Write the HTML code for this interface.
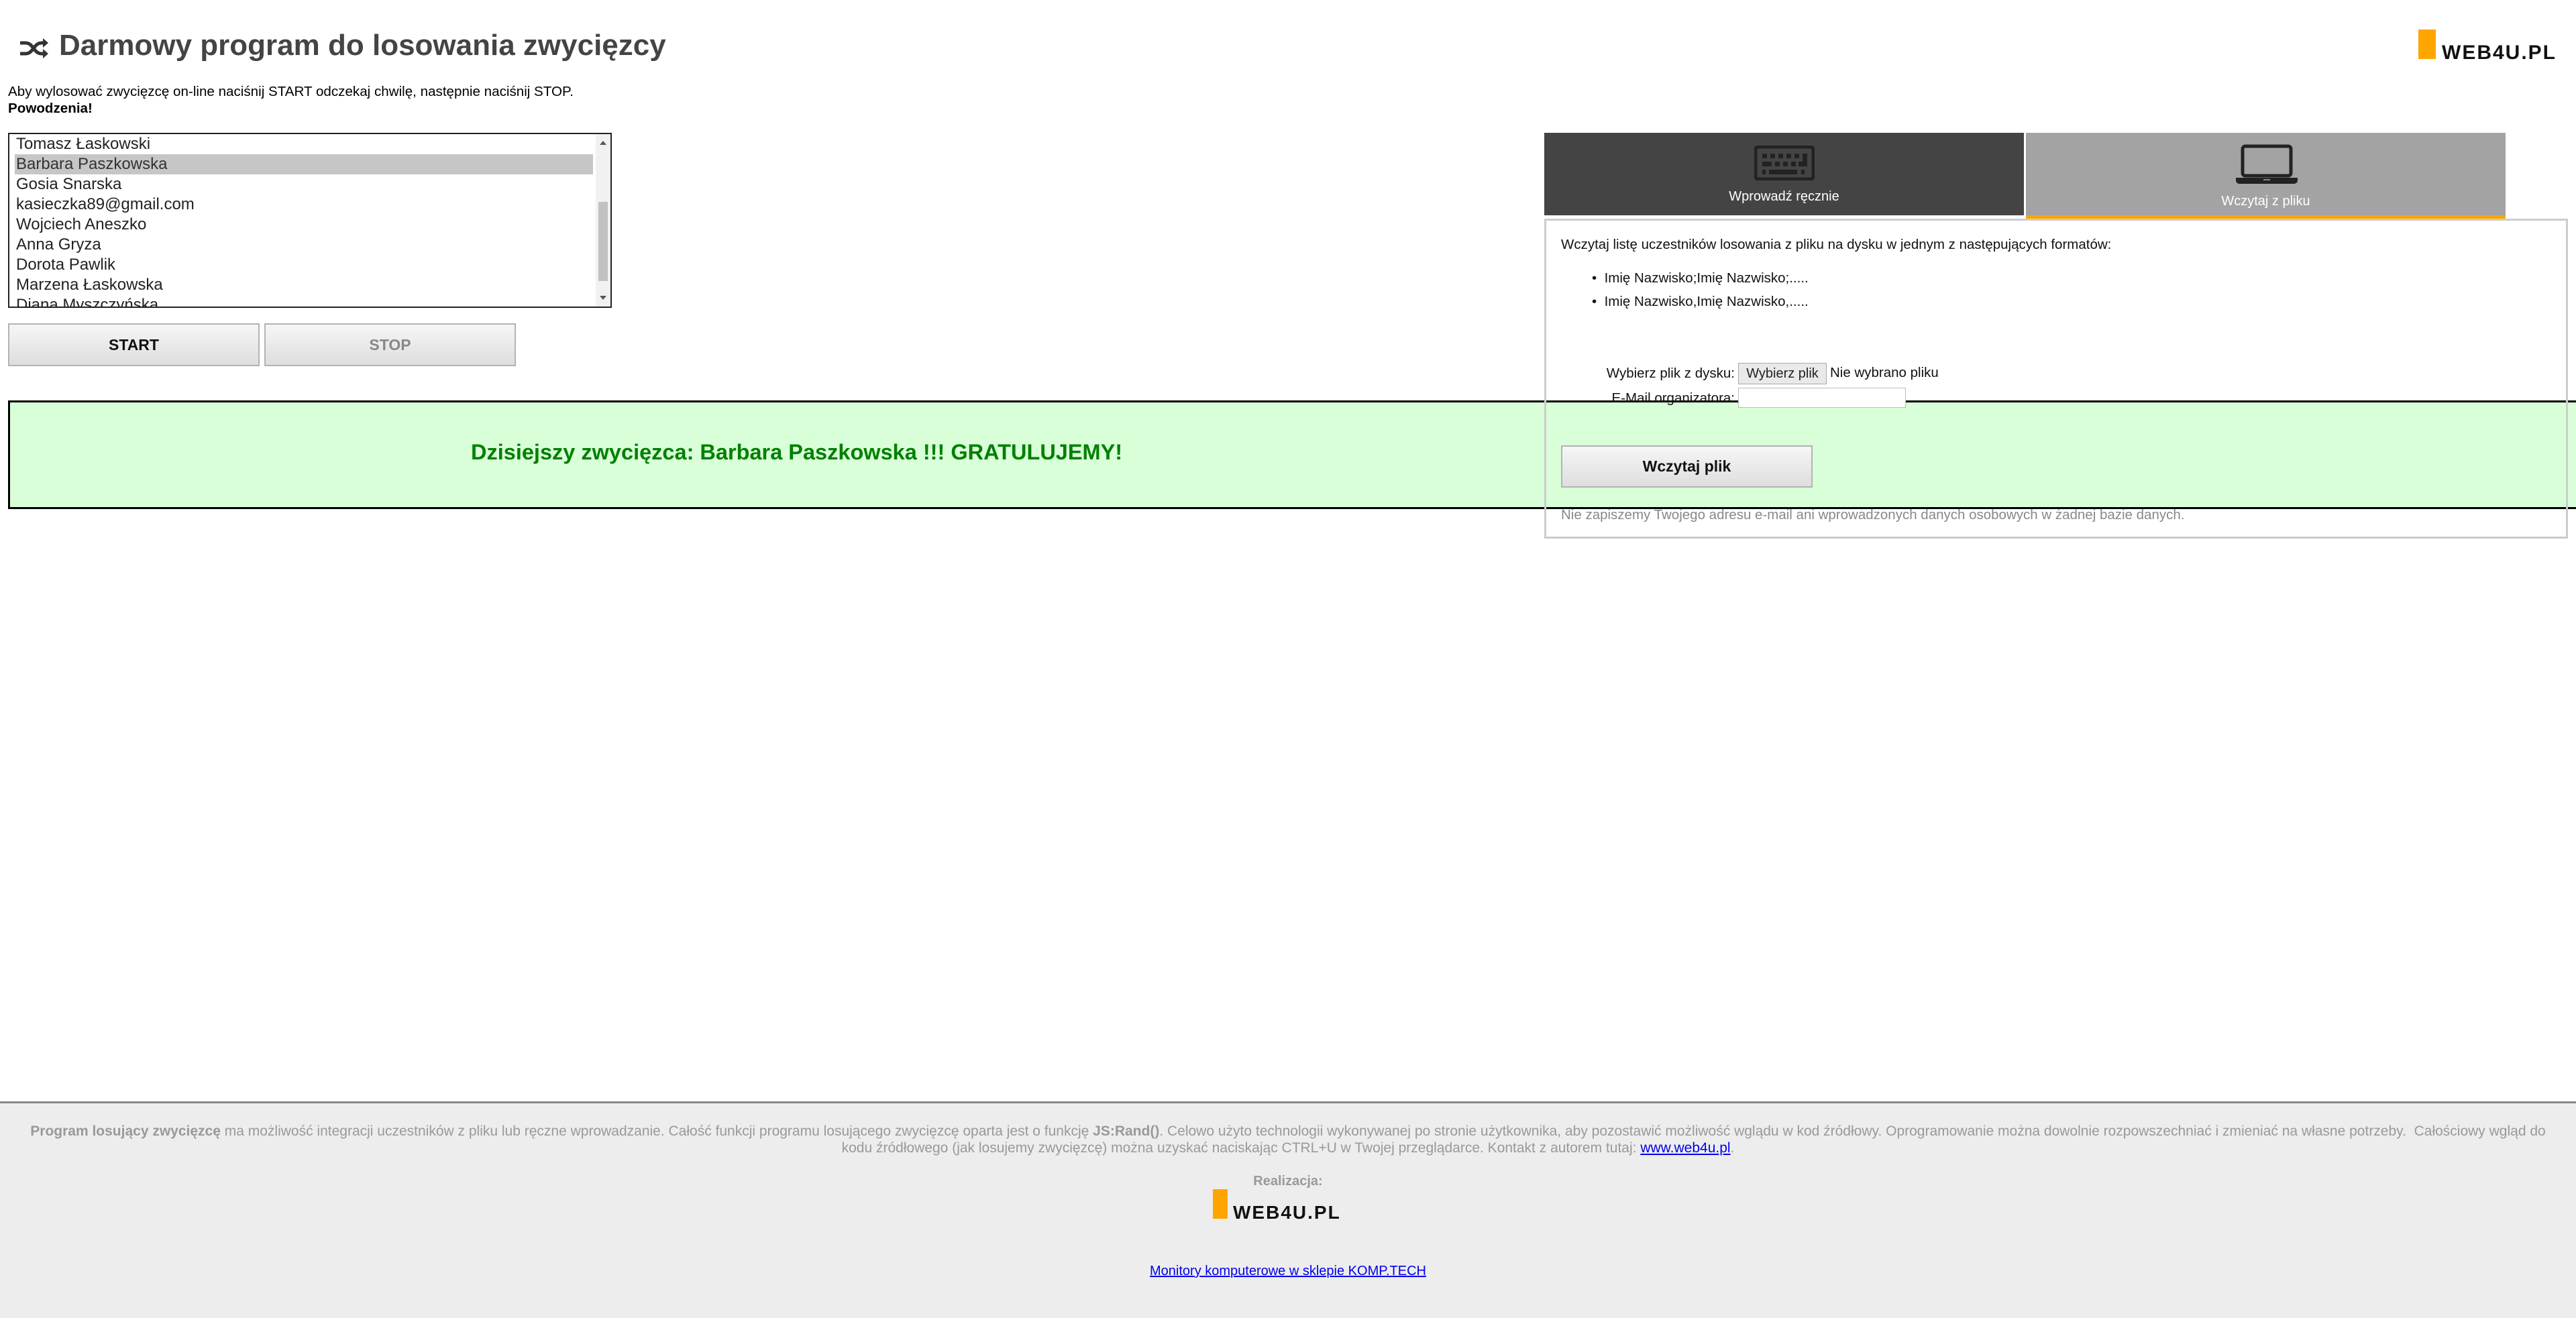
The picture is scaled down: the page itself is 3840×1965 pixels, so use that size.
<!DOCTYPE html>
<html><head><meta charset="utf-8">
<style>
*{margin:0;padding:0;box-sizing:border-box}
body{width:3840px;height:1965px;position:relative;background:#fff;font-family:"Liberation Sans",Arial,sans-serif;overflow:hidden;color:#000}
.a{position:absolute;white-space:nowrap}
.btn{position:absolute;background:linear-gradient(#f6f6f6,#dedede);border:2px solid #b3b3b3;font-weight:bold;font-size:23px;display:flex;align-items:center;justify-content:center}
.item{height:30px;line-height:30px;font-size:24px;padding-left:10px;color:#222}
.p{font-size:20.5px;color:#111}
</style></head><body>

<svg class="a" style="left:28px;top:56px" width="44" height="32" viewBox="0 0 44 32">
<path d="M2 8h8c6 0 9 4 12 8s6 8 12 8h4M2 24h8c6 0 9-4 12-8s6-8 12-8h4" fill="none" stroke="#333" stroke-width="5"/>
<path d="M36 1l8 7-8 7zM36 17l8 7-8 7z" fill="#333"/></svg>
<div class="a" style="left:88px;top:43px;font-size:44px;font-weight:bold;color:#444">Darmowy program do losowania zwycięzcy</div>

<div class="a" style="left:12px;top:125px;font-size:20.6px">Aby wylosować zwycięzcę on-line naciśnij START odczekaj chwilę, następnie naciśnij STOP.</div>
<div class="a" style="left:12px;top:150px;font-size:20.6px;font-weight:bold">Powodzenia!</div>

<div class="a" style="left:12px;top:198px;width:900px;height:261px;border:2px solid #222;overflow:hidden">
 <div style="position:absolute;left:0;top:0;width:876px">
  <div class="item">Tomasz Łaskowski</div>
  <div class="item" style="background:#c6c6c6;margin:0 6px 0 8px;padding-left:2px;color:#333">Barbara Paszkowska</div>
  <div class="item">Gosia Snarska</div>
  <div class="item">kasieczka89@gmail.com</div>
  <div class="item">Wojciech Aneszko</div>
  <div class="item">Anna Gryza</div>
  <div class="item">Dorota Pawlik</div>
  <div class="item">Marzena Łaskowska</div>
  <div class="item">Diana Myszczyńska</div>
 </div>
 <div style="position:absolute;right:0;top:0;width:22px;height:100%;background:#f1f1f1">
  <div style="position:absolute;left:4px;top:101px;width:14px;height:118px;background:#c1c1c1"></div>
  <div style="position:absolute;left:6px;top:10px;border-left:5px solid transparent;border-right:5px solid transparent;border-bottom:6px solid #555"></div>
  <div style="position:absolute;left:6px;bottom:10px;border-left:5px solid transparent;border-right:5px solid transparent;border-top:6px solid #555"></div>
 </div>
</div>

<div class="btn" style="left:12px;top:482px;width:375px;height:64px;color:#111">START</div>
<div class="btn" style="left:394px;top:482px;width:375px;height:64px;color:#888">STOP</div>

<div class="a" style="left:12px;top:597px;width:3828px;height:162px;background:#d9ffd9;border:3px solid #000;border-right:none"></div>
<div class="a" style="left:702px;top:656px;font-size:32.5px;font-weight:bold;color:#008000">Dzisiejszy zwycięzca: Barbara Paszkowska !!! GRATULUJEMY!</div>

<!-- tabs -->
<div class="a" style="left:2302px;top:198px;width:715px;height:123px;background:#444"></div>
<div class="a" style="left:3020px;top:198px;width:715px;height:123px;background:#a3a3a3"></div>
<div class="a" style="left:3020px;top:321px;width:715px;height:7px;background:#ffa500"></div>
<svg class="a" style="left:2615px;top:217px" width="90" height="52" viewBox="0 0 90 52">
<rect x="2" y="2" width="86" height="48" rx="4" fill="none" stroke="#222" stroke-width="5"/>
<g fill="#222"><rect x="12" y="12" width="7" height="7"/><rect x="24" y="12" width="7" height="7"/><rect x="36" y="12" width="7" height="7"/><rect x="48" y="12" width="7" height="7"/><rect x="60" y="12" width="7" height="7"/><rect x="72" y="12" width="7" height="18"/>
<rect x="12" y="24" width="14" height="7"/><rect x="31" y="24" width="7" height="7"/><rect x="43" y="24" width="7" height="7"/><rect x="55" y="24" width="7" height="7"/><rect x="66" y="24" width="13" height="7"/>
<rect x="12" y="36" width="5" height="7"/><rect x="22" y="36" width="42" height="7"/><rect x="70" y="36" width="5" height="7"/></g></svg>
<div class="a" style="left:2302px;top:282px;width:715px;text-align:center;font-size:20px;color:#fff">Wprowadź ręcznie</div>
<svg class="a" style="left:3333px;top:215px" width="92" height="60" viewBox="0 0 92 60">
<rect x="10" y="3" width="72" height="44" rx="4" fill="none" stroke="#222" stroke-width="5"/>
<path d="M0 50h92v4a5 5 0 0 1-5 5H5a5 5 0 0 1-5-5z" fill="#222"/><rect x="41" y="52" width="10" height="2" fill="#888"/></svg>
<div class="a" style="left:3020px;top:289px;width:715px;text-align:center;font-size:20px;color:#fff">Wczytaj z pliku</div>

<div class="a" style="left:2302px;top:326px;width:1526px;height:477px;border:3px solid #ccc"></div>
<div class="a p" style="left:2327px;top:353px">Wczytaj listę uczestników losowania z pliku na dysku w jednym z następujących formatów:</div>
<div class="a p" style="left:2373px;top:403px">•&nbsp;&nbsp;Imię Nazwisko;Imię Nazwisko;.....</div>
<div class="a p" style="left:2373px;top:438px">•&nbsp;&nbsp;Imię Nazwisko,Imię Nazwisko,.....</div>
<div class="a p" style="left:2386px;top:545px;width:200px;text-align:right">Wybierz plik z dysku:</div>
<div class="a" style="left:2591px;top:541px;width:132px;height:32px;background:#e9e9e9;border:1px solid #aaa;font-size:20px;text-align:center;line-height:30px;color:#222">Wybierz plik</div>
<div class="a p" style="left:2728px;top:544px">Nie wybrano pliku</div>
<div class="a p" style="left:2386px;top:582px;width:200px;text-align:right">E-Mail organizatora:</div>
<div class="a" style="left:2591px;top:578px;width:250px;height:30px;background:#fff;border:1px solid #bbb"></div>
<div class="btn" style="left:2327px;top:664px;width:375px;height:63px;color:#111">Wczytaj plik</div>
<div class="a" style="left:2327px;top:756px;font-size:20.5px;color:#888">Nie zapiszemy Twojego adresu e-mail ani wprowadzonych danych osobowych w żadnej bazie danych.</div>

<!-- top-right logo -->
<div class="a" style="left:3605px;top:44px;width:26px;height:44px;background:#ffa500"></div>
<div class="a" style="left:3640px;top:62px;font-size:30px;font-weight:bold;color:#111;letter-spacing:2px">WEB4U.PL</div>

<!-- footer -->
<div class="a" style="left:0;top:1642px;width:3840px;height:323px;background:#ededed;border-top:3px solid #888"></div>
<div class="a" style="left:0;top:1674px;width:3840px;text-align:center;font-size:21px;color:#999;line-height:25px"><b>Program losujący zwycięzcę</b> ma możliwość integracji uczestników z pliku lub ręczne wprowadzanie. Całość funkcji programu losującego zwycięzcę oparta jest o funkcję <b>JS:Rand()</b>. Celowo użyto technologii wykonywanej po stronie użytkownika, aby pozostawić możliwość wglądu w kod źródłowy. Oprogramowanie można dowolnie rozpowszechniać i zmieniać na własne potrzeby.&nbsp; Całościowy wgląd do<br>kodu źródłowego (jak losujemy zwycięzcę) można uzyskać naciskając CTRL+U w Twojej przeglądarce. Kontakt z autorem tutaj: <span style="color:#00e;text-decoration:underline">www.web4u.pl</span>.</div>
<div class="a" style="left:0;top:1750px;width:3840px;text-align:center;font-size:20px;font-weight:bold;color:#999">Realizacja:</div>
<div class="a" style="left:1808px;top:1773px;width:22px;height:44px;background:#ffa500"></div>
<div class="a" style="left:1838px;top:1792px;font-size:28px;font-weight:bold;color:#111;letter-spacing:2px">WEB4U.PL</div>
<div class="a" style="left:0;top:1884px;width:3840px;text-align:center;font-size:20px;color:#00e;text-decoration:underline">Monitory komputerowe w sklepie KOMP.TECH</div>
</body></html>
